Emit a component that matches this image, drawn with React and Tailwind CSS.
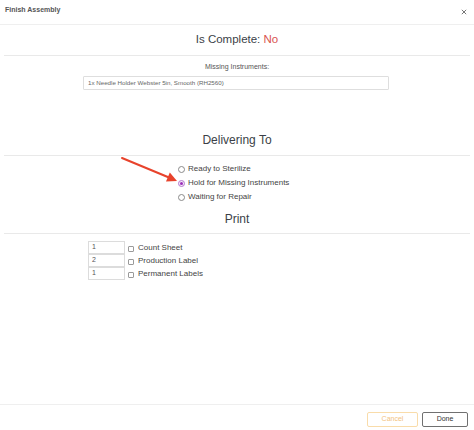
import React, { useState } from "react";

const deliveryOptions = ["Ready to Sterilize", "Hold for Missing Instruments", "Waiting for Repair"];

const printItems = [
  { qty: "1", label: "Count Sheet" },
  { qty: "2", label: "Production Label" },
  { qty: "1", label: "Permanent Labels" },
];

function Radio({ checked }) {
  return (
    <span
      className={`w-[7px] h-[7px] rounded-full border flex items-center justify-center ${
        checked ? "border-[#b57bd0] bg-[#f3e6f8]" : "border-[#8a8a8a] bg-white"
      }`}
    >
      {checked && <span className="w-[3px] h-[3px] rounded-full bg-[#9b2fb8]" />}
    </span>
  );
}

export default function App() {
  const [delivery, setDelivery] = useState(1);

  return (
    <div className="relative w-[474px] h-[430px] bg-white flex flex-col font-['Liberation_Sans',Arial,sans-serif] overflow-hidden">
      {/* Header */}
      <div className="h-[25px] border-b border-[#efefef] flex items-start justify-between pl-[5px] pr-[6px] pt-[4px]">
        <span className="text-[7px] leading-[11px] font-semibold text-[#555]">Finish Assembly</span>
        <svg width="8" height="8" viewBox="0 0 8 8" className="mt-[4px]">
          <path d="M1.8 1.8 L6.2 6.2 M6.2 1.8 L1.8 6.2" stroke="#777" strokeWidth="1" />
        </svg>
      </div>

      {/* Body */}
      <div className="flex-1 flex flex-col">
        <div className="h-[31px] mx-[4px] border-b border-[#e9e9e9] flex items-center justify-center text-[11.5px] text-[#3b3f47]">
          Is Complete:&nbsp;<span className="text-[#d9534f]">No</span>
        </div>

        <div className="pt-[6px] text-center text-[7px] leading-[10px] text-[#555]">Missing Instruments:</div>
        <div className="mt-[4px] ml-[83px] w-[306px] h-[14px] border border-[#dedede] rounded-[1px] flex items-center pl-[4px] text-[6.2px] text-[#666]">
          1x Needle Holder Webster 5in, Smooth (RH2560)
        </div>

        <div className="mt-[35px] h-[31px] mx-[4px] border-b border-[#e9e9e9] flex items-center justify-center text-[12px] text-[#3b3f47]">
          Delivering To
        </div>

        <div className="pt-[6px] pl-[178px] flex flex-col">
          {deliveryOptions.map((opt, i) => (
            <label
              key={opt}
              className="h-[14px] flex items-center gap-[3px] text-[8px] text-[#444] cursor-pointer"
              onClick={() => setDelivery(i)}
            >
              <Radio checked={delivery === i} />
              <span>{opt}</span>
            </label>
          ))}
        </div>

        <div className="h-[30px] mx-[4px] border-b border-[#e9e9e9] flex items-center justify-center text-[12px] text-[#3b3f47]">
          Print
        </div>

        <div className="pt-[7px] pl-[88px] flex flex-col">
          {printItems.map((item) => (
            <div key={item.label} className="h-[13px] flex items-center">
              <div className="w-[37px] h-[13px] border border-[#dcdcdc] flex items-center pl-[3px] text-[7px] text-[#555]">
                {item.qty}
              </div>
              <span className="ml-[3px] mt-[2px] w-[6px] h-[6px] border border-[#9a9a9a] rounded-[1px] bg-white" />
              <span className="ml-[4px] text-[8px] text-[#444]">{item.label}</span>
            </div>
          ))}
        </div>
      </div>

      {/* Footer */}
      <div className="h-[26px] border-t border-[#efefef] flex items-start justify-end gap-[4px] pt-[7px] pr-[6px]">
        <button className="w-[51px] h-[15px] border border-[#f9dcaa] rounded-[2px] text-[7px] text-[#f2c27e] bg-white">
          Cancel
        </button>
        <button className="w-[46px] h-[15px] border border-[#707070] rounded-[2px] text-[7px] text-[#333] bg-white">
          Done
        </button>
      </div>

      {/* Annotation arrow */}
      <svg className="absolute inset-0 pointer-events-none" width="474" height="430">
        <line x1="122" y1="158" x2="169" y2="177.5" stroke="#e8432c" strokeWidth="2" strokeLinecap="round" />
        <polygon points="177,181 166,181.5 169.8,172.5" fill="#e8432c" />
      </svg>
    </div>
  );
}
